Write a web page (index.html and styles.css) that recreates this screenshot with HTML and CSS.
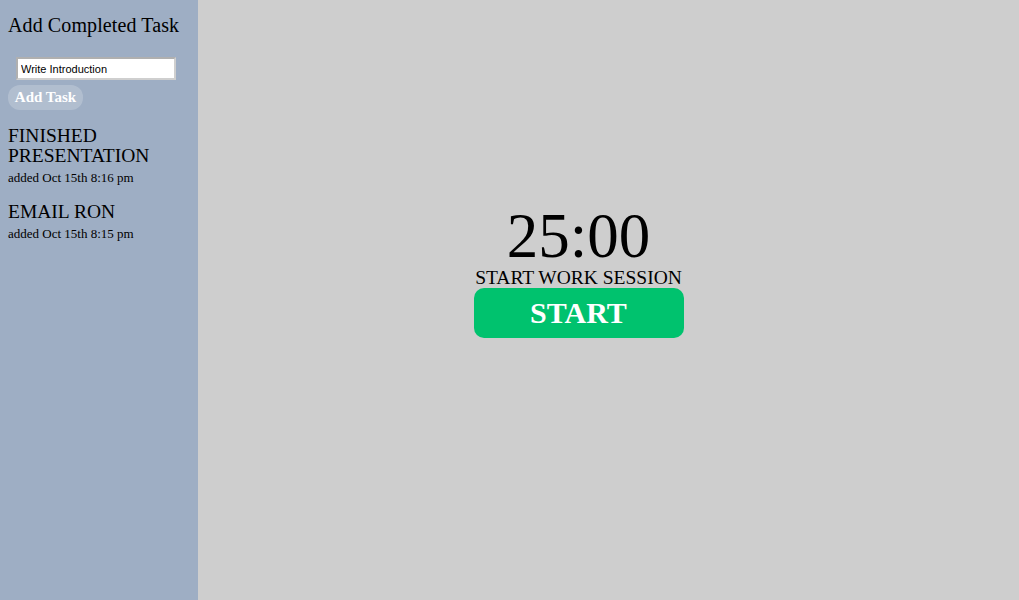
FILE: index.html
```html
<!DOCTYPE html>
<html>
<head>
<meta charset="utf-8">
<link rel="stylesheet" href="styles.css">
</head>
<body>
<div class="app">
  <aside class="sidebar">
    <h2 class="side-title">Add Completed Task</h2>
    <div class="task-form">
      <input class="task-input" type="text" value="Write Introduction">
      <button class="add-btn">Add Task</button>
    </div>
    <ul class="task-list">
      <li class="task">
        <div class="task-name">FINISHED PRESENTATION</div>
        <div class="task-date">added Oct 15th 8:16 pm</div>
      </li>
      <li class="task">
        <div class="task-name">EMAIL RON</div>
        <div class="task-date">added Oct 15th 8:15 pm</div>
      </li>
    </ul>
  </aside>
  <main class="main">
    <div class="timer">
      <div class="time">25:00</div>
      <div class="session">START WORK SESSION</div>
      <button class="start-btn">START</button>
    </div>
  </main>
</div>
</body>
</html>
```
FILE: styles.css
```css
html, body {
  margin: 0;
  padding: 0;
  height: 100%;
}
body {
  font-family: "Liberation Serif", "DejaVu Serif", serif;
  color: #000;
}
.app {
  display: flex;
  height: 600px;
}
.sidebar {
  width: 198px;
  flex: none;
  background: #9eaec4;
  padding: 0 8px;
  box-sizing: border-box;
}
.side-title {
  margin: 0;
  padding-top: 13px;
  font-size: 20px;
  font-weight: normal;
  line-height: 24px;
  letter-spacing: 0.1px;
}
.task-form {
  display: flex;
  flex-direction: column;
  align-items: flex-start;
  margin-top: 20px;
}
.task-input {
  margin-left: 8px;
  width: 160px;
  height: 23px;
  box-sizing: border-box;
  border: 2px solid #c4c4c4;
  border-color: #b0b0b0 #cfcfcf #cfcfcf #b0b0b0;
  padding: 1px 3px;
  font-family: "Liberation Sans", Arial, sans-serif;
  font-size: 11px;
  color: #000;
  background: #fff;
}
.add-btn {
  margin-top: 5px;
  width: 75px;
  height: 25px;
  border: none;
  border-radius: 12px;
  background: rgba(255, 255, 255, 0.2);
  color: #fff;
  font-family: "Liberation Serif", serif;
  font-weight: bold;
  font-size: 15px;
  padding: 0;
}
.task-list {
  list-style: none;
  margin: 16px 0 0 0;
  padding: 0;
}
.task {
  margin-bottom: 16px;
}
.task-name {
  font-size: 19.5px;
  line-height: 20px;
}
.task-date {
  font-size: 13px;
  line-height: 16px;
  margin-top: 4px;
}
.main {
  flex: 1;
  background: #cecece;
  display: flex;
  align-items: center;
  justify-content: center;
  padding-right: 60px;
  padding-bottom: 58px;
}
.timer {
  display: flex;
  flex-direction: column;
  align-items: center;
}
.time {
  font-size: 63px;
  line-height: 64px;
}
.session {
  font-size: 19.5px;
  line-height: 20px;
}
.start-btn {
  width: 210px;
  height: 50px;
  border: none;
  border-radius: 10px;
  background: #00c26e;
  color: #fff;
  font-family: "Liberation Serif", serif;
  font-weight: bold;
  font-size: 30px;
  padding: 0;
}
```
